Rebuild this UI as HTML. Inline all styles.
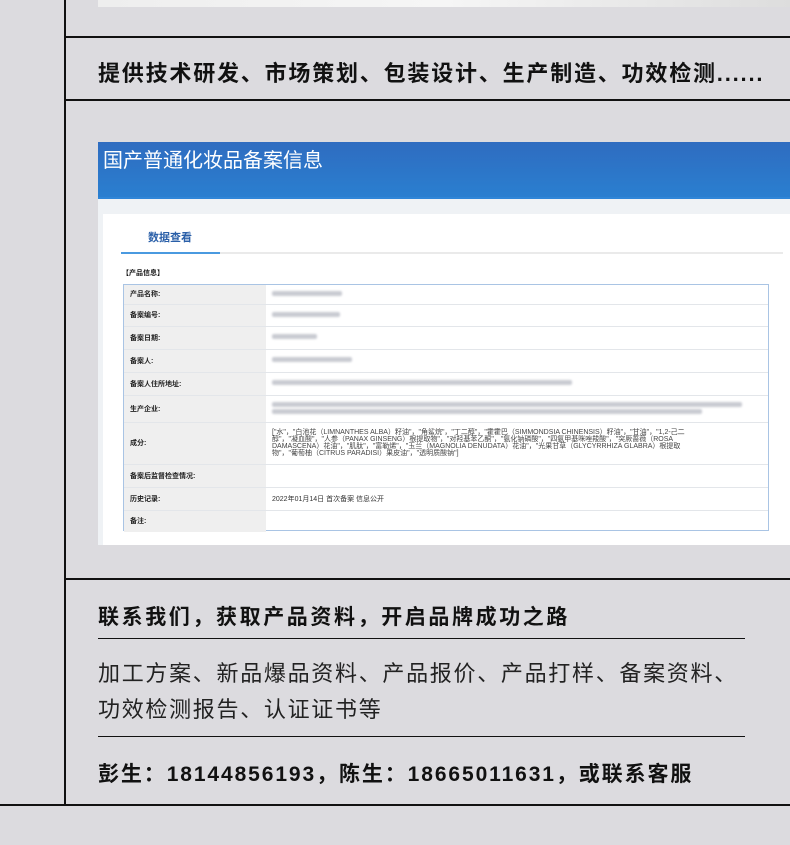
<!DOCTYPE html>
<html><head><meta charset="utf-8"><style>
*{margin:0;padding:0;box-sizing:border-box}
body{width:790px;height:845px;background:#dcdbdf;position:relative;overflow:hidden;font-family:"Liberation Sans","Noto Sans CJK SC",sans-serif;color:#111}
.a{position:absolute}
.hl{position:absolute;height:1.5px;background:#111}
.t{position:absolute;white-space:nowrap}
table{border-collapse:collapse;width:100%;font-size:7px}
td{border-bottom:1px solid #e3e6ea;padding-left:6px;color:#333}
td.l{background:#efefef;width:142px;font-weight:bold;color:#222}
.bl{display:inline-block;height:5px;background:#c9cbd2;filter:blur(1px);border-radius:2px}
</style></head><body>
<div class="a" style="left:98px;top:0;width:692px;height:7px;background:linear-gradient(90deg,#eee,#f6f6f6,#ddd)"></div>
<div class="a" style="left:64px;top:0;width:1.5px;height:805px;background:#111"></div>
<div class="hl" style="left:64px;top:36px;width:726px"></div>
<div class="t" style="left:98px;top:56px;font-size:22px;font-weight:bold;letter-spacing:1.8px">提供技术研发、市场策划、包装设计、生产制造、功效检测......</div>
<div class="hl" style="left:64px;top:99px;width:726px"></div>

<div class="a" style="left:98px;top:142px;width:692px;height:403px;background:#eff2f5">
 <div class="a" style="left:0;top:0;width:692px;height:57px;background:linear-gradient(180deg,#2f6cc0,#2a7fd0);border-bottom:2px solid #2f86d8"></div>
 <div class="t" style="left:5px;top:2px;color:#fff;font-size:20px">国产普通化妆品备案信息</div>
 <div class="a" style="left:5px;top:72px;width:687px;height:331px;background:#fff"></div>
 <div class="t" style="left:50px;top:87px;font-size:11px;font-weight:bold;color:#2a5fa8">数据查看</div>
 <div class="a" style="left:23px;top:110px;width:662px;height:2px;background:#eaeaea"></div>
 <div class="a" style="left:23px;top:110px;width:99px;height:2px;background:#4a9ae0"></div>
 <div class="t" style="left:24px;top:126px;font-size:7px;font-weight:bold">【产品信息】</div>
 <div class="a" style="left:25px;top:142px;width:646px;height:247px;border:1px solid #a9c4e4">
 <table>
  <tr style="height:19px"><td class="l">产品名称:</td><td><span class="bl" style="width:70px"></span></td></tr>
  <tr style="height:22px"><td class="l">备案编号:</td><td><span class="bl" style="width:68px"></span></td></tr>
  <tr style="height:23px"><td class="l">备案日期:</td><td><span class="bl" style="width:45px"></span></td></tr>
  <tr style="height:23px"><td class="l">备案人:</td><td><span class="bl" style="width:80px"></span></td></tr>
  <tr style="height:23px"><td class="l">备案人住所地址:</td><td><span class="bl" style="width:300px"></span></td></tr>
  <tr style="height:27px"><td class="l">生产企业:</td><td><span class="bl" style="width:470px"></span><br><span class="bl" style="width:430px"></span></td></tr>
  <tr style="height:42px"><td class="l">成分:</td><td style="font-size:7px;line-height:7px;color:#444">["水"，"白池花（LIMNANTHES ALBA）籽油"，"角鲨烷"，"丁二醇"，"霍霍巴（SIMMONDSIA CHINENSIS）籽油"，"甘油"，"1,2-己二<br>醇"，"凝血酸"，"人参（PANAX GINSENG）根提取物"，"对羟基苯乙酮"，"氨化钠磷酸"，"四氨甲基咪唑羧酸"，"突厥蔷薇（ROSA<br>DAMASCENA）花油"，"肌肽"，"富勒烯"，"玉兰（MAGNOLIA DENUDATA）花油"，"光果甘草（GLYCYRRHIZA GLABRA）根提取<br>物"，"葡萄柚（CITRUS PARADISI）果皮油"，"透明质酸钠"]</td></tr>
  <tr style="height:23px"><td class="l">备案后监督检查情况:</td><td></td></tr>
  <tr style="height:23px"><td class="l">历史记录:</td><td>2022年01月14日 首次备案 信息公开</td></tr>
  <tr style="height:22px"><td class="l" style="border:none">备注:</td><td style="border:none"></td></tr>
 </table>
 </div>
</div>

<div class="hl" style="left:64px;top:578px;width:726px"></div>
<div class="t" style="left:98px;top:601px;font-size:21px;font-weight:bold;letter-spacing:2.6px">联系我们，获取产品资料，开启品牌成功之路</div>
<div class="hl" style="left:98px;top:638px;width:647px;height:1.2px"></div>
<div class="t" style="left:98px;top:656px;font-size:22px;letter-spacing:1.7px;color:#222">加工方案、新品爆品资料、产品报价、产品打样、备案资料、</div>
<div class="t" style="left:98px;top:692px;font-size:22px;letter-spacing:1.7px;color:#222">功效检测报告、认证证书等</div>
<div class="hl" style="left:98px;top:736px;width:647px;height:1.2px"></div>
<div class="t" style="left:98px;top:758px;font-size:21px;font-weight:bold;letter-spacing:1.9px">彭生：18144856193，陈生：18665011631，或联系客服</div>
<div class="hl" style="left:0;top:804px;width:790px"></div>
</body></html>
